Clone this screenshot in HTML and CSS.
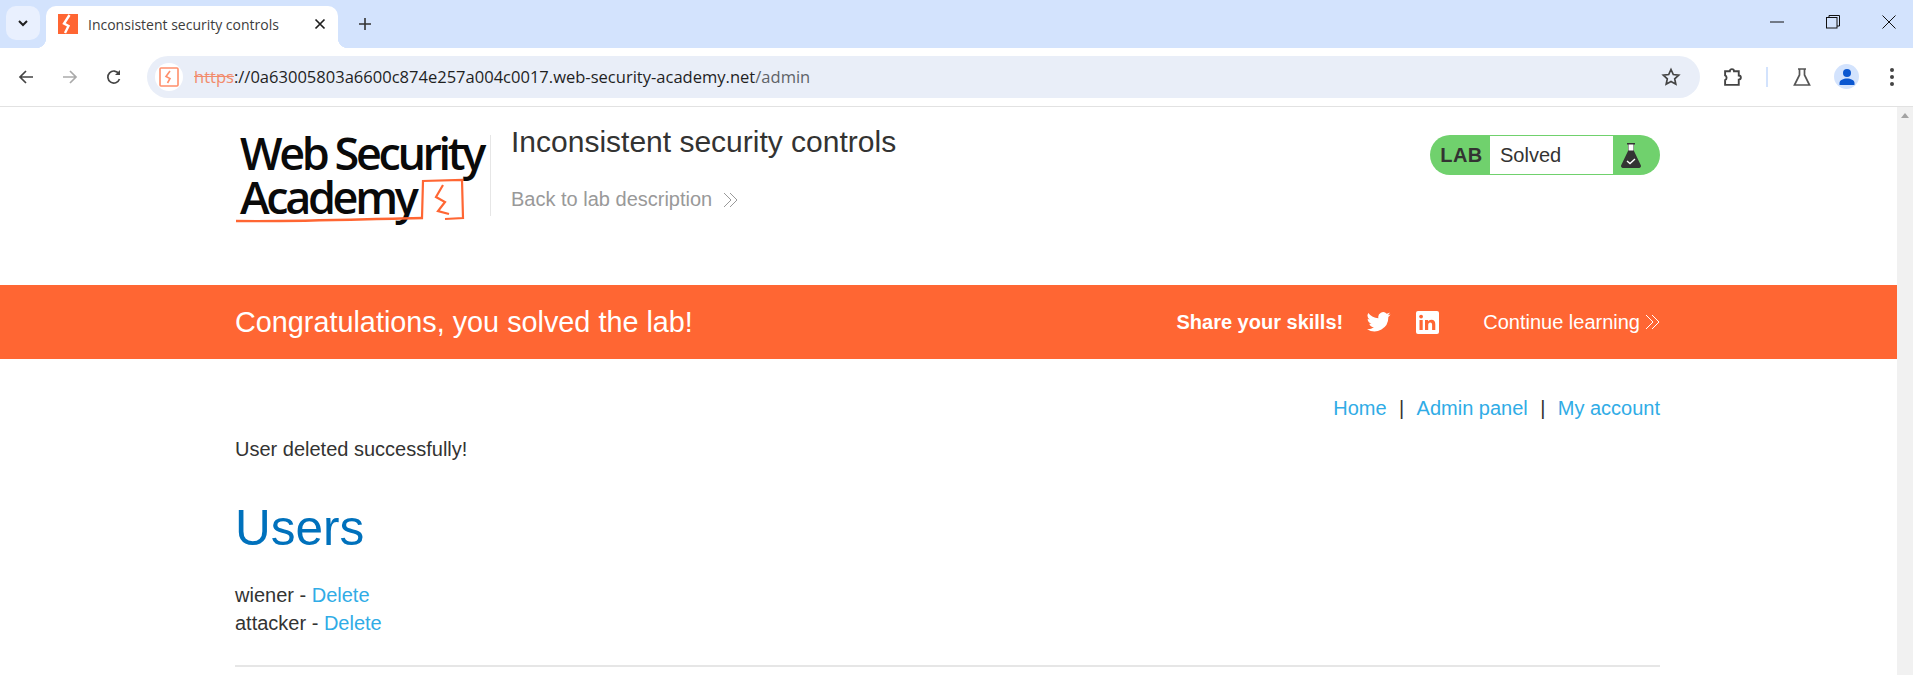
FILE: index.html
```html
<!DOCTYPE html>
<html lang="en">
<head>
    <meta charset="UTF-8">
    <meta name="viewport" content="width=device-width, initial-scale=1.0">
    <title>Inconsistent security controls</title>
    <link rel="stylesheet" href="styles.css">
</head>
<body>
    <div class="tabstrip">
        <div class="tab-list">
            <svg width="14" height="14" viewBox="0 0 14 14"><path d="M3 5l4 4 4-4" fill="none" stroke="#1f1f1f" stroke-width="2"/></svg>
        </div>
        <div class="tab">
            <svg class="tab-icon" width="20" height="20" viewBox="0 0 20 20"><rect width="20" height="20" fill="#ff6633"/><path d="M11.500 1L6 9.500l4.500 2.500L7 19" fill="none" stroke="#fff" stroke-width="2.400"/></svg>
            <span class="tab-title">Inconsistent security controls</span>
            <svg class="tab-close" width="12" height="12" viewBox="0 0 12 12"><path d="M1.500 1.500l9 9M10.500 1.500l-9 9" stroke="#1f1f1f" stroke-width="1.700"/></svg>
        </div>
        <svg class="new-tab" width="14" height="14" viewBox="0 0 14 14"><path d="M7 1v12M1 7h12" stroke="#333" stroke-width="1.600"/></svg>
        <div class="window-controls">
            <svg width="14" height="14" viewBox="0 0 14 14"><path d="M0 7h14" stroke="#111" stroke-width="1"/></svg>
            <svg width="14" height="14" viewBox="0 0 14 14"><rect x=".5" y="2.500" width="10.500" height="10.500" fill="none" stroke="#111"/><path d="M3 2.500V.5h10.500v10.500h-2.500" fill="none" stroke="#111"/></svg>
            <svg width="14" height="14" viewBox="0 0 14 14"><path d="M.5.5l13 13M13.500.5l-13 13" stroke="#111"/></svg>
        </div>
    </div>

    <div class="toolbar">
        <svg class="tool-icon" width="16" height="16" viewBox="0 0 16 16"><path d="M15 8H2M8 2L2 8l6 6" fill="none" stroke="#444" stroke-width="1.700"/></svg>
        <svg class="tool-icon" width="16" height="16" viewBox="0 0 16 16"><path d="M1 8h13M8 2l6 6-6 6" fill="none" stroke="#aaa" stroke-width="1.700"/></svg>
        <svg class="tool-icon" width="16" height="16" viewBox="0 0 16 16"><path d="M13.500 10a6 6 0 1 1-.6-5.200" fill="none" stroke="#444" stroke-width="1.700"/><path d="M14 1v5H9z" fill="#444"/></svg>
        <div class="omnibox">
            <div class="site-icon">
                <svg width="20" height="20" viewBox="0 0 20 20"><rect x="1" y="1" width="18" height="18" rx="1" fill="#fff" stroke="#ff8f6b" stroke-width="1.600"/><path d="M11 4L7 9.500l4 2-2.500 4.500" fill="none" stroke="#ff8f6b" stroke-width="1.600"/></svg>
            </div>
            <div class="url"><span class="url-scheme">https</span><span class="url-dark">://0a63005803a6600c874e257a004c0017.web-security-academy.net</span>/admin</div>
            <svg class="star" width="20" height="20" viewBox="0 0 20 20"><path d="M10 2.500l2.300 5 5.400.6-4 3.700 1.100 5.400L10 14.500l-4.800 2.700 1.100-5.400-4-3.700 5.400-.6z" fill="none" stroke="#444" stroke-width="1.700"/></svg>
        </div>
        <div class="toolbar-right">
            <svg width="21" height="21" viewBox="0 0 20 20"><path d="M2 5h4.500a2 2 0 0 1 4 0H15v4a2 2 0 0 1 0 4v5H2v-4.500a2.500 2.500 0 0 0 0-4.500z" fill="none" stroke="#444" stroke-width="1.800"/></svg>
            <span class="toolbar-divider"></span>
            <svg width="20" height="20" viewBox="0 0 20 20"><path d="M6 2h8M7.500 2v6L2.500 18h15l-5-10V2" fill="none" stroke="#555" stroke-width="1.700"/></svg>
            <div class="avatar">
                <svg width="18" height="18" viewBox="0 0 18 18"><circle cx="9" cy="5" r="4" fill="#0b57d0"/><path d="M1.500 17v-2c0-3 4-4.500 7.500-4.500s7.500 1.500 7.500 4.500v2z" fill="#0b57d0"/></svg>
            </div>
            <div class="dots"><i></i><i></i><i></i></div>
        </div>
    </div>

    <div class="viewport">
        <div class="page">
            <header class="lab-header">
                <div class="container lab-header-row">
                    <div class="logo">
                        <div class="logo-line">Web Security</div>
                        <div class="logo-line">Academy</div>
                        <svg class="logo-mark" width="254" height="50" viewBox="0 0 254 50"><path d="M1 44c60 1 130-2 187-3" fill="none" stroke="#ff6633" stroke-width="2.400"/><path d="M186 41h1l1-37 39-1 1 38-18 1" fill="none" stroke="#ff6633" stroke-width="2.200"/><path d="M208 8l-7 12 9 5-7 9 11 3" fill="none" stroke="#ff6633" stroke-width="2.200"/></svg>
                    </div>
                    <div class="lab-title">
                        <h2>Inconsistent security controls</h2>
                        <a class="back-link" href="#">Back to lab description
                            <svg class="chevrons" width="16" height="16" viewBox="0 0 16 16"><path d="M1 1l7 7-7 7M7 1l7 7-7 7" fill="none" stroke="#999" stroke-width="1"/></svg>
                        </a>
                    </div>
                    <div class="lab-status">
                        <span class="status-lab">LAB</span>
                        <span class="status-text">Solved</span>
                        <span class="status-icon">
                            <svg width="20" height="25" viewBox="0 0 20 25"><path d="M6 0h8v1.500h-1V8l6.700 14a2 2 0 0 1-1.800 3H2.100a2 2 0 0 1-1.800-3L7 8V1.500H6z" fill="#333"/><rect x="7.500" y="1.500" width="5" height="6" fill="#fff"/><path d="M6 18l3 2.500 5-4.500" fill="none" stroke="#fff" stroke-width="1.400"/></svg>
                        </span>
                    </div>
                </div>
            </header>

            <section class="solved-banner">
                <div class="container banner-row">
                    <h4>Congratulations, you solved the lab!</h4>
                    <div class="banner-right">
                        <strong>Share your skills!</strong>
                        <svg class="twitter" width="24" height="20" viewBox="0 0 24 20"><path d="M23.500 2.400c-.9.400-1.800.6-2.800.8 1-.6 1.800-1.500 2.100-2.700-.9.600-2 1-3.100 1.200A4.900 4.900 0 0 0 11.400 6.200 13.800 13.800 0 0 1 1.300.9a4.900 4.900 0 0 0 1.500 6.500c-.8 0-1.500-.2-2.200-.6 0 2.400 1.700 4.400 3.900 4.900-.7.200-1.500.2-2.200.1.600 2 2.400 3.400 4.600 3.400A9.800 9.800 0 0 1 0 17.200 13.800 13.800 0 0 0 21.300 4.900c1-.7 1.700-1.500 2.200-2.500z" fill="#fff"/></svg>
                        <svg class="linkedin" width="23" height="23" viewBox="0 0 23 23"><rect width="23" height="23" rx="2" fill="#fff"/><rect x="3.500" y="9" width="3.200" height="10" fill="#ff6633"/><circle cx="5.100" cy="5.600" r="1.900" fill="#ff6633"/><path d="M9 9h3v1.500c.6-1 1.800-1.800 3.300-1.800 3 0 4 1.900 4 4.700V19h-3.200v-5c0-1.400-.4-2.600-1.800-2.600s-2.100 1.100-2.100 2.600v5H9z" fill="#ff6633"/></svg>
                        <a class="continue-link" href="#">Continue learning
                            <svg class="chevrons" width="15" height="16" viewBox="0 0 15 16"><path d="M1 1l7 7-7 7M7 1l7 7-7 7" fill="none" stroke="#fff" stroke-width="1"/></svg>
                        </a>
                    </div>
                </div>
            </section>

            <main class="container content">
                <nav class="top-links">
                    <a href="#">Home</a><span>|</span><a href="#">Admin panel</a><span>|</span><a href="#">My account</a>
                </nav>
                <p class="notice">User deleted successfully!</p>
                <h1>Users</h1>
                <div class="user-list">
                    <div>wiener - <a href="#">Delete</a></div>
                    <div>attacker - <a href="#">Delete</a></div>
                </div>
                <hr>
            </main>
        </div>
        <div class="scrollbar"><span class="scroll-arrow"></span></div>
    </div>
</body>
</html>
```

FILE: styles.css
```css
* {
    box-sizing: border-box;
}
html, body {
    height: 100%;
}
body {
    margin: 0;
    overflow: hidden;
    font-family: "Liberation Sans", Arial, sans-serif;
    color: #333332;
    background-color: #fff;
}

/* browser chrome */
.tabstrip {
    display: flex;
    align-items: flex-end;
    height: 48px;
    background-color: #d3e3fd;
}
.tab-list {
    display: flex;
    align-items: center;
    justify-content: center;
    width: 34px;
    height: 34px;
    margin: 0 6px 8px 6px;
    background-color: #e9f0fe;
    border-radius: 10px;
}
.tab {
    position: relative;
    display: flex;
    align-items: center;
    width: 292px;
    height: 42px;
    padding: 0 12px 6px 12px;
    background-color: #fff;
    border-radius: 10px 10px 0 0;
}
.tab::before,
.tab::after {
    content: "";
    position: absolute;
    bottom: 0;
    width: 10px;
    height: 10px;
}
.tab::before {
    left: -10px;
    background: radial-gradient(circle at 0 0, #d3e3fd 10px, #fff 10.500px);
}
.tab::after {
    right: -10px;
    background: radial-gradient(circle at 100% 0, #d3e3fd 10px, #fff 10.500px);
}
.tab-title {
    flex: 1;
    margin-left: 10px;
    font-family: "Open Sans", sans-serif;
    font-size: 14px;
    color: #3c3c3c;
    white-space: nowrap;
}
.new-tab {
    margin: 0 0 17px 20px;
}
.window-controls {
    display: flex;
    gap: 42px;
    margin: 0 17px 19px auto;
}
.toolbar {
    display: flex;
    align-items: center;
    height: 59px;
    padding: 0 0 1px 0;
    background-color: #fff;
    border-bottom: 1px solid #e2e2e2;
    border-radius: 10px 10px 0 0;
}
.tool-icon {
    flex: none;
    margin-left: 18px;
    margin-right: 10px;
}
.omnibox {
    flex: 1;
    display: flex;
    align-items: center;
    height: 42px;
    margin-left: 15px;
    padding: 0 19px 0 8px;
    background-color: #e9eef8;
    border-radius: 21px;
}
.site-icon {
    display: flex;
    align-items: center;
    justify-content: center;
    width: 28px;
    height: 28px;
    background-color: #fff;
    border-radius: 50%;
}
.url {
    flex: 1;
    margin-left: 11px;
    font-family: "Open Sans", sans-serif;
    font-size: 16.550px;
    color: #5f6368;
    white-space: nowrap;
}
.url-scheme {
    color: #f28b6c;
    text-decoration: line-through;
}
.url-dark {
    color: #1f1f1f;
}
.toolbar-right {
    display: flex;
    align-items: center;
    width: 213px;
    padding-left: 23px;
}
.toolbar-divider {
    width: 2px;
    height: 20px;
    margin: 0 24px 0 22px;
    background-color: #d3e3fd;
}
.avatar {
    display: flex;
    align-items: center;
    justify-content: center;
    width: 25px;
    height: 25px;
    margin-left: 22px;
    background-color: #d3e3fd;
    border-radius: 50%;
}
.dots {
    display: flex;
    flex-direction: column;
    gap: 3px;
    margin-left: 31px;
}
.dots i {
    display: block;
    width: 4px;
    height: 4px;
    background-color: #444;
    border-radius: 50%;
}

/* page */
.viewport {
    display: flex;
    height: 568px;
}
.page {
    flex: 1;
    overflow: hidden;
}
.scrollbar {
    width: 16px;
    background-color: #f1f1f1;
}
.scroll-arrow {
    display: block;
    width: 0;
    margin: 6px auto 0;
    border-left: 4px solid transparent;
    border-right: 4px solid transparent;
    border-bottom: 5px solid #a3a3a3;
}
.container {
    width: 1425px;
    margin: 0 0 0 235px;
}
.lab-header {
    height: 178px;
}
.lab-header-row {
    display: flex;
    align-items: flex-start;
}
.logo {
    position: relative;
    width: 256px;
    height: 81px;
    margin-top: 28px;
    padding-left: 5px;
    border-right: 1px solid #e6e6e6;
    color: #0a0a0a;
    font-family: "Open Sans", sans-serif;
    font-size: 45px;
    line-height: 44px;
    letter-spacing: -3.400px;
    font-weight: 600;
    white-space: nowrap;
}
.logo-line {
    position: relative;
    top: -4px;
}
.logo-mark {
    position: absolute;
    left: 0;
    top: 42px;
}
.lab-title {
    margin-left: 20px;
    flex: 1;
    padding-top: 18px;
}
.lab-title h2 {
    margin: 0;
    font-size: 30px;
    font-weight: 400;
    line-height: 34px;
}
.back-link {
    display: flex;
    align-items: center;
    gap: 11px;
    margin-top: 29px;
    color: #999;
    font-size: 20px;
    text-decoration: none;
}
.lab-status {
    display: flex;
    align-items: stretch;
    width: 230px;
    height: 40px;
    margin-top: 28px;
    background-color: #70d16d;
    border-radius: 20px;
}
.status-lab {
    display: flex;
    align-items: center;
    justify-content: center;
    width: 60px;
    padding-left: 3px;
    font-size: 20px;
    font-weight: 700;
    letter-spacing: .5px;
}
.status-text {
    flex: 1;
    display: flex;
    align-items: center;
    margin: 1px 0;
    padding-left: 10px;
    background-color: #fff;
    font-size: 20px;
}
.status-icon {
    display: flex;
    align-items: center;
    width: 47px;
    padding-left: 8px;
}
.solved-banner {
    height: 74px;
    background-color: #ff6633;
    color: #fff;
}
.banner-row {
    display: flex;
    align-items: center;
    justify-content: space-between;
    height: 100%;
}
.banner-row h4 {
    margin: 0;
    font-size: 28.800px;
    font-weight: 400;
}
.banner-right {
    display: flex;
    align-items: center;
}
.banner-right strong {
    font-size: 20px;
}
.twitter {
    margin-left: 24px;
}
.linkedin {
    margin-left: 25px;
}
.continue-link {
    display: flex;
    align-items: center;
    gap: 5px;
    margin-left: 44px;
    color: #fff;
    font-size: 20px;
    text-decoration: none;
}
.content {
    font-size: 20px;
    line-height: 28px;
}
.content a {
    color: #30ace6;
    text-decoration: none;
}
.top-links {
    display: flex;
    justify-content: flex-end;
    gap: 12.400px;
    padding-top: 35px;
}
.notice {
    margin: 13px 0 0;
}
.content h1 {
    margin: 35px 0 0;
    color: #0071bc;
    font-size: 49.500px;
    font-weight: 400;
    line-height: 60px;
}
.user-list {
    margin-top: 23px;
}
hr {
    height: 2px;
    margin: 28px 0 0;
    border: 0;
    background-color: #e6e6e6;
}
```
